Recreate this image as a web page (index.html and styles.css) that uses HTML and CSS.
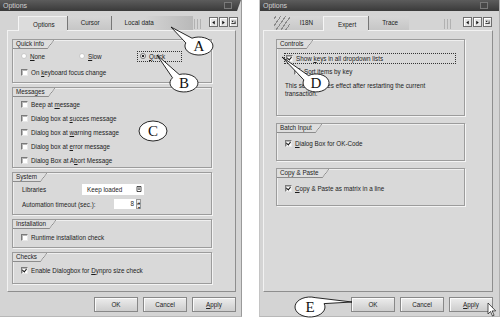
FILE: index.html
```html
<!DOCTYPE html>
<html lang="en">
<head>
  <meta charset="UTF-8">
  <title>Options</title>
  <link rel="stylesheet" href="styles.css">
</head>
<body>
  <div class="window left">
    <div class="titlebar"><span>Options</span><span class="tb-btn"></span></div>
    <div class="tabstrip">
      <div class="tabs">
        <div class="tab active">Options</div>
        <div class="tab">Cursor</div>
        <div class="tab wide">Local data</div>
      </div>
      <div class="fade"></div>
      <div class="scrollers">
        <span class="sbtn"><svg viewBox="0 0 4 4"><path d="M3,0.5 L1,2 L3,3.5Z"/></svg></span>
        <span class="sbtn"><svg viewBox="0 0 4 4"><path d="M1,0.5 L3,2 L1,3.5Z"/></svg></span>
        <span class="sbtn"><svg viewBox="0 0 4 4"><path d="M0.3,0.5 L2.3,0.5 L1.3,1.8Z M2.8,0.6h1v0.5h-1Z M2.8,1.6h1v0.5h-1Z M0.3,2.6h3.5v0.5h-3.5Z"/></svg></span>
      </div>
    </div>
    <div class="panel">
      <div class="group g-quick">
        <div class="group-title">Quick info</div>
        <div class="rows">
          <div class="row radios">
            <label class="radio"><span class="dot"></span><span><u>N</u>one</span></label>
            <label class="radio"><span class="dot"></span><span><u>S</u>low</span></label>
            <label class="radio focus"><span class="dot on"></span><span><u>Q</u>uick</span></label>
          </div>
          <div class="row"><span class="box"></span><span>On <u>k</u>eyboard focus change</span></div>
        </div>
      </div>
      <div class="group g-messages">
        <div class="group-title">Messages</div>
        <div class="rows">
          <div class="row"><span class="box"></span><span>Beep at <u>m</u>essage</span></div>
          <div class="row"><span class="box"></span><span>Dialog box at <u>s</u>ucces message</span></div>
          <div class="row"><span class="box"></span><span>Dialog box at <u>w</u>arning message</span></div>
          <div class="row"><span class="box"></span><span>Dialog box at <u>e</u>rror message</span></div>
          <div class="row"><span class="box"></span><span>Dialog Box at A<u>b</u>ort Message</span></div>
        </div>
      </div>
      <div class="group g-system">
        <div class="group-title">System</div>
        <div class="rows">
          <div class="row field">
            <span class="flabel">Libraries</span>
            <span class="combo">Keep loaded<svg viewBox="0 0 6 6"><path d="M1,0.5h4v5h-4Z" fill="none" stroke="#222" stroke-width="0.8"/><path d="M2,2h2M2,3.3h2" stroke="#222" stroke-width="0.7"/></svg></span>
          </div>
          <div class="row field">
            <span class="flabel long">Automation timeout (sec.):</span>
            <span class="spin"><span class="spin-val">8</span><span class="spin-btns"><i>▴</i><i>▾</i></span></span>
          </div>
        </div>
      </div>
      <div class="group g-install">
        <div class="group-title">Installation</div>
        <div class="rows">
          <div class="row"><span class="box"></span><span>Runtime installation check</span></div>
        </div>
      </div>
      <div class="group g-checks">
        <div class="group-title">Checks</div>
        <div class="rows">
          <div class="row"><span class="box checked"></span><span>Enable Dialogbox for <u>D</u>ynpro size check</span></div>
        </div>
      </div>
    </div>
    <div class="buttons">
      <button>OK</button>
      <button>Cancel</button>
      <button><u>A</u>pply</button>
    </div>
  </div>

  <div class="window right">
    <div class="titlebar"><span>Options</span><span class="tb-btn"></span></div>
    <div class="tabstrip">
      <div class="tabs">
        <div class="tab hatched">I18N</div>
        <div class="tab active">Expert</div>
        <div class="tab">Trace</div>
      </div>
      <div class="fade"></div>
      <div class="scrollers">
        <span class="sbtn"><svg viewBox="0 0 4 4"><path d="M3,0.5 L1,2 L3,3.5Z"/></svg></span>
        <span class="sbtn"><svg viewBox="0 0 4 4"><path d="M1,0.5 L3,2 L1,3.5Z"/></svg></span>
        <span class="sbtn"><svg viewBox="0 0 4 4"><path d="M0.3,0.5 L2.3,0.5 L1.3,1.8Z M2.8,0.6h1v0.5h-1Z M2.8,1.6h1v0.5h-1Z M0.3,2.6h3.5v0.5h-3.5Z"/></svg></span>
      </div>
    </div>
    <div class="panel">
      <div class="group g-controls">
        <div class="group-title">Controls</div>
        <div class="rows">
          <div class="row focus-row"><span class="box checked"></span><span>Show <u>k</u>eys in all dropdown lists</span></div>
          <div class="row indent"><span class="box"></span><span><u>S</u>ort items by key</span></div>
          <p class="note">This setting takes effect after restarting the current transaction.</p>
        </div>
      </div>
      <div class="group g-batch">
        <div class="group-title">Batch Input</div>
        <div class="rows">
          <div class="row"><span class="box checked"></span><span><u>D</u>ialog Box for OK-Code</span></div>
        </div>
      </div>
      <div class="group g-copy">
        <div class="group-title">Copy &amp; Paste</div>
        <div class="rows">
          <div class="row"><span class="box checked"></span><span><u>C</u>opy &amp; Paste as matrix in a line</span></div>
        </div>
      </div>
    </div>
    <div class="buttons">
      <button>OK</button>
      <button>Cancel</button>
      <button><u>A</u>pply</button>
    </div>
  </div>

  <svg class="callouts" viewBox="0 0 500 318">
    <path d="M192,38.2 A14 9 0 1 1 185.8,42.9 L171,27 Z"/>
    <text x="199" y="51">A</text>
    <path d="M179.2,74.5 A14 9 0 1 1 172.5,77.8 L157,55 Z"/>
    <text x="184" y="88">B</text>
    <ellipse cx="153" cy="131" rx="14" ry="10"/>
    <text x="153" y="136">C</text>
    <path d="M308.5,75.6 A13 9 0 1 1 303.8,79.9 L282,57 Z"/>
    <text x="316" y="88">D</text>
    <path d="M324.1,303.6 A15 10 0 1 1 315.1,297.6 L352,302 Z"/>
    <text x="310" y="312">E</text>
    <path class="cursor" d="M488,303 l0,11 l2.5,-2.5 l2,4.5 l1.6,-0.7 l-2,-4.4 l3.6,0 Z"/>
  </svg>
</body>
</html>
```

FILE: styles.css
```css
* {
  box-sizing: border-box;
}
body {
  margin: 0;
  width: 500px;
  height: 318px;
  background: #fff;
  font-family: 'Liberation Sans', Arial, sans-serif;
  font-size: 6.3px;
  color: #1c1c1c;
  display: flex;
  justify-content: space-between;
  position: relative;
  overflow: hidden;
}
u {
  text-decoration: underline;
  text-underline-offset: 1px;
}
.window {
  width: 242px;
  height: 317px;
  background: #d4d4d4;
  display: flex;
  flex-direction: column;
  border-right: 1px solid #9a9a9a;
  border-bottom: 1px solid #b8b8b8;
}
.window.right {
  width: 241px;
  border-left: 1px solid #c4c4c4;
  border-right: 1px solid #b0b0b0;
}
.titlebar {
  height: 11px;
  flex-shrink: 0;
  background: linear-gradient(#5c5c5c, #3a3a3a);
  color: #d0d0d0;
  font-size: 7px;
  display: flex;
  align-items: center;
  justify-content: space-between;
  padding: 0 9px 0 3px;
  clip-path: polygon(0 0, 100% 0, calc(100% - 4px) 100%, 0 100%);
}
.right .titlebar {
  padding-right: 11px;
  clip-path: none;
}
.tb-btn {
  width: 8px;
  height: 7px;
  border: 1px solid #7a7a7a;
  background: #484848;
}
.tabstrip {
  height: 19px;
  flex-shrink: 0;
  display: flex;
  align-items: flex-end;
  padding-left: 18px;
}
.right .tabstrip {
  padding-left: 14px;
}
.tabs {
  display: flex;
  align-items: flex-end;
  height: 15px;
}
.tab {
  height: 14px;
  line-height: 14px;
  padding: 0 11px 0 13px;
  background: linear-gradient(#d6d6d6, #c6c6c6);
  border-left: 1px solid #777;
  color: #222;
  font-size: 6.3px;
}
.tab.wide {
  width: 82px;
  background: linear-gradient(90deg, #d4d4d4 40%, #b9b9b9);
}
.tab.active {
  height: 15px;
  line-height: 15px;
  margin-bottom: -1px;
  background: #dcdcdc;
  border-left: 1px solid #f6f6f6;
  border-top: 1px solid #f0f0f0;
  padding: 0 12px 0 14px;
  z-index: 1;
}
.tab.hatched {
  width: 49px;
  text-align: right;
  padding-right: 10px;
  border-left: none;
  background: repeating-linear-gradient(-55deg, transparent 0 3px, #8a8a8a 3px 4px) left / 16px 100% no-repeat, linear-gradient(#d8d8d8, #c8c8c8);
}
.fade {
  width: 9px;
  height: 10px;
  margin: 0 0 1px 1px;
  background: repeating-linear-gradient(90deg, #9a9a9a 0 1px, transparent 1px 3px);
  opacity: 0.6;
}
.right .fade {
  margin-left: 35px;
}
.scrollers {
  display: flex;
  gap: 1px;
  margin: 0 0 3px 6px;
  align-self: flex-end;
}
.right .scrollers {
  margin-left: 10px;
}
.sbtn {
  width: 9px;
  height: 10px;
  background: #e4e4e4;
  border: 1px solid #6e6e6e;
  box-shadow: inset 1px 1px #fff;
  display: flex;
  align-items: center;
  justify-content: center;
}
.sbtn svg {
  width: 5px;
  height: 5px;
  fill: #111;
}
.panel {
  height: 262px;
  flex-shrink: 0;
  margin: 0 5px 0 7px;
  border: 1px solid;
  border-color: #f2f2f2 #8e8e8e #8e8e8e #f2f2f2;
  background: #d9d9d9;
  padding: 8px 0 0 4px;
  display: flex;
  flex-direction: column;
  gap: 4px;
}
.right .panel {
  margin: 0 6px 0 3px;
  padding-left: 12px;
  gap: 7px;
}
.group {
  width: 200px;
  border: 1px solid #9c9c9c;
  box-shadow: 1px 1px #f4f4f4, inset 1px 1px #efefef;
  display: flex;
  flex-direction: column;
}
.right .group {
  width: 189px;
}
.group-title {
  align-self: flex-start;
  height: 9px;
  line-height: 8px;
  padding: 0 10px 0 3px;
  background:
    linear-gradient(#8c8c8c, #8c8c8c) left bottom / calc(100% - 7px) 1px no-repeat,
    linear-gradient(to bottom right, transparent calc(50% - 0.6px), #8c8c8c 50%, transparent calc(50% + 0.6px)) right / 7px 100% no-repeat,
    linear-gradient(to bottom right, #dedede 50%, transparent 50%) right / 7px 100% no-repeat,
    linear-gradient(#dedede, #dedede) left / calc(100% - 7px) 100% no-repeat;
  color: #222;
}
.rows {
  padding-left: 8px;
  display: flex;
  flex-direction: column;
}
.row {
  height: 14px;
  display: flex;
  align-items: center;
  gap: 3px;
  white-space: nowrap;
}
.box {
  width: 7px;
  height: 7px;
  background: #fff;
  border: 1px solid;
  border-color: #7a7a7a #e8e8e8 #e8e8e8 #7a7a7a;
  box-shadow: inset 1px 1px #b8b8b8;
  flex-shrink: 0;
  position: relative;
}
.box.checked::after {
  content: '';
  position: absolute;
  left: 1px;
  top: 0;
  width: 2px;
  height: 3px;
  border: solid #111;
  border-width: 0 1.2px 1.2px 0;
  transform: rotate(40deg);
}
.radios {
  gap: 0;
}
.radio {
  display: flex;
  align-items: center;
  gap: 3px;
  width: 58px;
  height: 11px;
}
.radio.focus {
  width: 45px;
  padding-left: 2px;
  border: 1px dotted #333;
}
.dot {
  width: 6px;
  height: 6px;
  border-radius: 50%;
  background: #fff;
  border: 1px solid #c8c8c8;
}
.dot.on {
  border-color: #777;
  background: radial-gradient(#222 0 1.3px, #fff 1.6px);
}
.g-quick {
  height: 44px;
}
.g-quick .rows {
  gap: 2px;
}
.g-messages {
  height: 81px;
}
.g-system {
  height: 43px;
}
.g-system .rows {
  padding-top: 1px;
  gap: 3px;
}
.g-system .row {
  height: 12px;
}
.flabel {
  width: 58px;
  padding-left: 1px;
}
.flabel.long {
  width: 90px;
}
.combo {
  width: 62px;
  height: 11px;
  background: #fff;
  padding: 0 2px 0 5px;
  display: flex;
  align-items: center;
  justify-content: space-between;
}
.combo svg {
  width: 6px;
  height: 6px;
}
.spin {
  display: flex;
  height: 10px;
}
.spin-val {
  width: 22px;
  background: #fff;
  text-align: right;
  padding-right: 2px;
  line-height: 10px;
}
.spin-btns {
  width: 5px;
  display: flex;
  flex-direction: column;
}
.spin-btns i {
  font-style: normal;
  font-size: 4px;
  line-height: 5px;
  height: 5px;
  text-align: center;
  background: #ececec;
  border: 0.5px solid #999;
}
.g-install {
  height: 29px;
}
.g-install .rows {
  padding-top: 1px;
}
.g-checks {
  height: 32px;
}
.g-checks .rows {
  padding-top: 1px;
}
.g-controls {
  height: 77px;
}
.g-controls .rows {
  padding-top: 4px;
}
.focus-row {
  height: 11px;
  margin-left: -1px;
  margin-right: 8px;
  padding-left: 1px;
  border: 1px dotted #333;
}
.indent {
  padding-left: 9px;
}
.note {
  margin: 4px 0 0;
  width: 152px;
  line-height: 8px;
}
.g-batch,
.g-copy {
  height: 38px;
}
.g-batch .rows,
.g-copy .rows {
  padding-top: 3px;
}
.buttons {
  display: flex;
  justify-content: flex-end;
  gap: 5px;
  padding: 5px 5px 0 0;
}
.right .buttons {
  padding-right: 6px;
}
.buttons button {
  width: 44px;
  height: 15px;
  padding: 0;
  font: inherit;
  color: #222;
  background: linear-gradient(#ececec, #cdcdcd);
  border: 1px solid #888;
  box-shadow: inset 1px 1px #fafafa;
}
.callouts {
  position: absolute;
  left: 0;
  top: 0;
  width: 500px;
  height: 318px;
  pointer-events: none;
}
.callouts path,
.callouts ellipse {
  fill: #fff;
  stroke: #111;
  stroke-width: 0.9;
}
.callouts text {
  font-family: 'Liberation Serif', 'Times New Roman', serif;
  font-size: 15px;
  text-anchor: middle;
  fill: #111;
}
.callouts .cursor {
  stroke-width: 0.7;
}
```
